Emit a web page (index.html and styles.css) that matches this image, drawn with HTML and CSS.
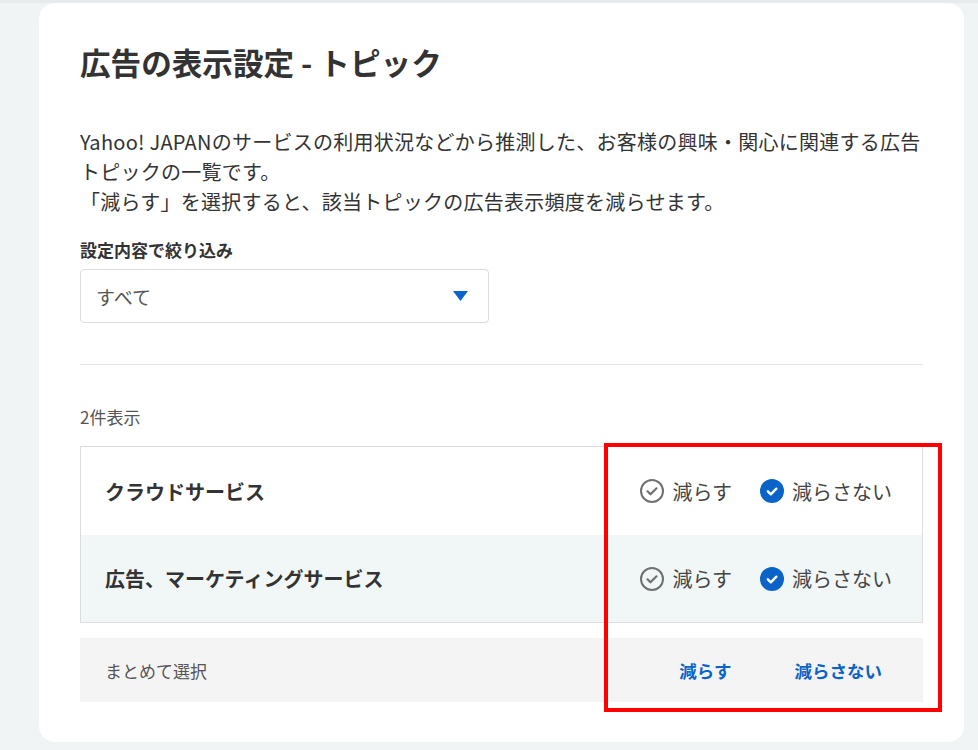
FILE: index.html
```html
<!DOCTYPE html>
<html lang="ja">
<head>
    <meta charset="UTF-8">
    <meta name="viewport" content="width=device-width, initial-scale=1.0">
    <title>広告の表示設定 - トピック</title>
    <link rel="stylesheet" href="styles.css">
</head>
<body>
    <div class="top-strip"></div>
    <div class="card">
        <h1>広告の表示設定 - トピック</h1>

        <p class="lead">Yahoo! JAPANのサービスの利用状況などから推測した、お客様の興味・関心に関連する広告トピックの一覧です。<br>「減らす」を選択すると、該当トピックの広告表示頻度を減らせます。</p>

        <div class="filter-label">設定内容で絞り込み</div>
        <div class="select">
            <span>すべて</span>
            <svg class="select-arrow" width="15" height="10" viewBox="0 0 15 10"><path d="M0 0h15L7.5 10z" fill="#0a64c8"/></svg>
        </div>

        <div class="divider"></div>

        <div class="count">2件表示</div>

        <div class="topics">
            <div class="topic">
                <div class="topic-name">クラウドサービス</div>
                <div class="choices">
                    <label class="choice">
                        <svg width="24" height="24" viewBox="0 0 24 24"><circle cx="12" cy="12" r="11" fill="none" stroke="#707070" stroke-width="2"/><path d="M7.5 12.3l3 3 6-6" fill="none" stroke="#707070" stroke-width="2.2" stroke-linecap="round" stroke-linejoin="round"/></svg>
                        減らす
                    </label>
                    <label class="choice">
                        <svg width="24" height="24" viewBox="0 0 24 24"><circle cx="12" cy="12" r="12" fill="#0a64c8"/><path d="M7.8 12.3l3 3 5.6-5.6" fill="none" stroke="#fff" stroke-width="2.4" stroke-linecap="round" stroke-linejoin="round"/></svg>
                        減らさない
                    </label>
                </div>
            </div>
            <div class="topic alt">
                <div class="topic-name">広告、マーケティングサービス</div>
                <div class="choices">
                    <label class="choice">
                        <svg width="24" height="24" viewBox="0 0 24 24"><circle cx="12" cy="12" r="11" fill="none" stroke="#707070" stroke-width="2"/><path d="M7.5 12.3l3 3 6-6" fill="none" stroke="#707070" stroke-width="2.2" stroke-linecap="round" stroke-linejoin="round"/></svg>
                        減らす
                    </label>
                    <label class="choice">
                        <svg width="24" height="24" viewBox="0 0 24 24"><circle cx="12" cy="12" r="12" fill="#0a64c8"/><path d="M7.8 12.3l3 3 5.6-5.6" fill="none" stroke="#fff" stroke-width="2.4" stroke-linecap="round" stroke-linejoin="round"/></svg>
                        減らさない
                    </label>
                </div>
            </div>
        </div>

        <div class="bulk">
            <span class="bulk-label">まとめて選択</span>
            <div class="bulk-actions">
                <button class="bulk-btn">減らす</button>
                <button class="bulk-btn">減らさない</button>
            </div>
        </div>

        <div class="highlight"></div>
    </div>
</body>
</html>
```

FILE: styles.css
```css
body {
    margin: 0;
    background: #f1f4f5;
    font-family: 'Noto Sans CJK JP', 'Noto Sans', sans-serif;
    color: #333;
}

.top-strip {
    height: 3px;
    background: #e8ebed;
}

.card {
    position: relative;
    background: white;
    border-radius: 16px;
    margin: 0 14px 8px 39px;
    padding: 38px 41px 40px;
}

h1 {
    margin: 0;
    font-size: 30.6px;
    line-height: 42px;
    font-weight: bold;
    color: #333;
}

.lead {
    margin: 44px 0 0;
    font-size: 20px;
    line-height: 30px;
    letter-spacing: 0.25px;
    color: #333;
}

.filter-label {
    margin-top: 21px;
    font-size: 17px;
    line-height: 24px;
    font-weight: bold;
}

.select {
    margin-top: 7px;
    width: 409px;
    height: 54px;
    box-sizing: border-box;
    border: 1px solid #dcdcdc;
    border-radius: 4px;
    display: flex;
    align-items: center;
    justify-content: space-between;
    padding: 0 20px 0 15px;
    font-size: 19px;
    color: #555;
}

.divider {
    margin-top: 41px;
    height: 1px;
    background: #e2e2e2;
}

.count {
    margin-top: 40px;
    font-size: 17px;
    line-height: 24px;
    color: #555;
}

.topics {
    margin-top: 17px;
    border: 1px solid #dddddd;
}

.topic {
    height: 88px;
    display: flex;
    align-items: center;
    justify-content: space-between;
    padding: 0 30px 0 24px;
}

.topic.alt {
    height: 87px;
    background: #f1f6f7;
}

.topic-name {
    font-size: 20px;
    font-weight: bold;
}

.choices {
    display: flex;
    gap: 28px;
}

.choice {
    display: flex;
    align-items: center;
    gap: 8px;
    font-size: 20px;
    color: #444;
}

.bulk {
    margin-top: 15px;
    height: 64px;
    background: #f4f4f4;
    display: flex;
    align-items: center;
    justify-content: space-between;
    padding: 0 41px 0 25px;
}

.bulk-label {
    font-size: 17px;
    color: #555;
}

.bulk-actions {
    display: flex;
    gap: 63px;
}

.bulk-btn {
    background: none;
    border: none;
    padding: 0;
    font-family: inherit;
    font-size: 17.5px;
    font-weight: bold;
    color: #0a64c8;
    cursor: pointer;
}

.highlight {
    position: absolute;
    left: 565px;
    top: 440px;
    width: 338px;
    height: 269px;
    box-sizing: border-box;
    border: 4px solid #ff0000;
}
```
